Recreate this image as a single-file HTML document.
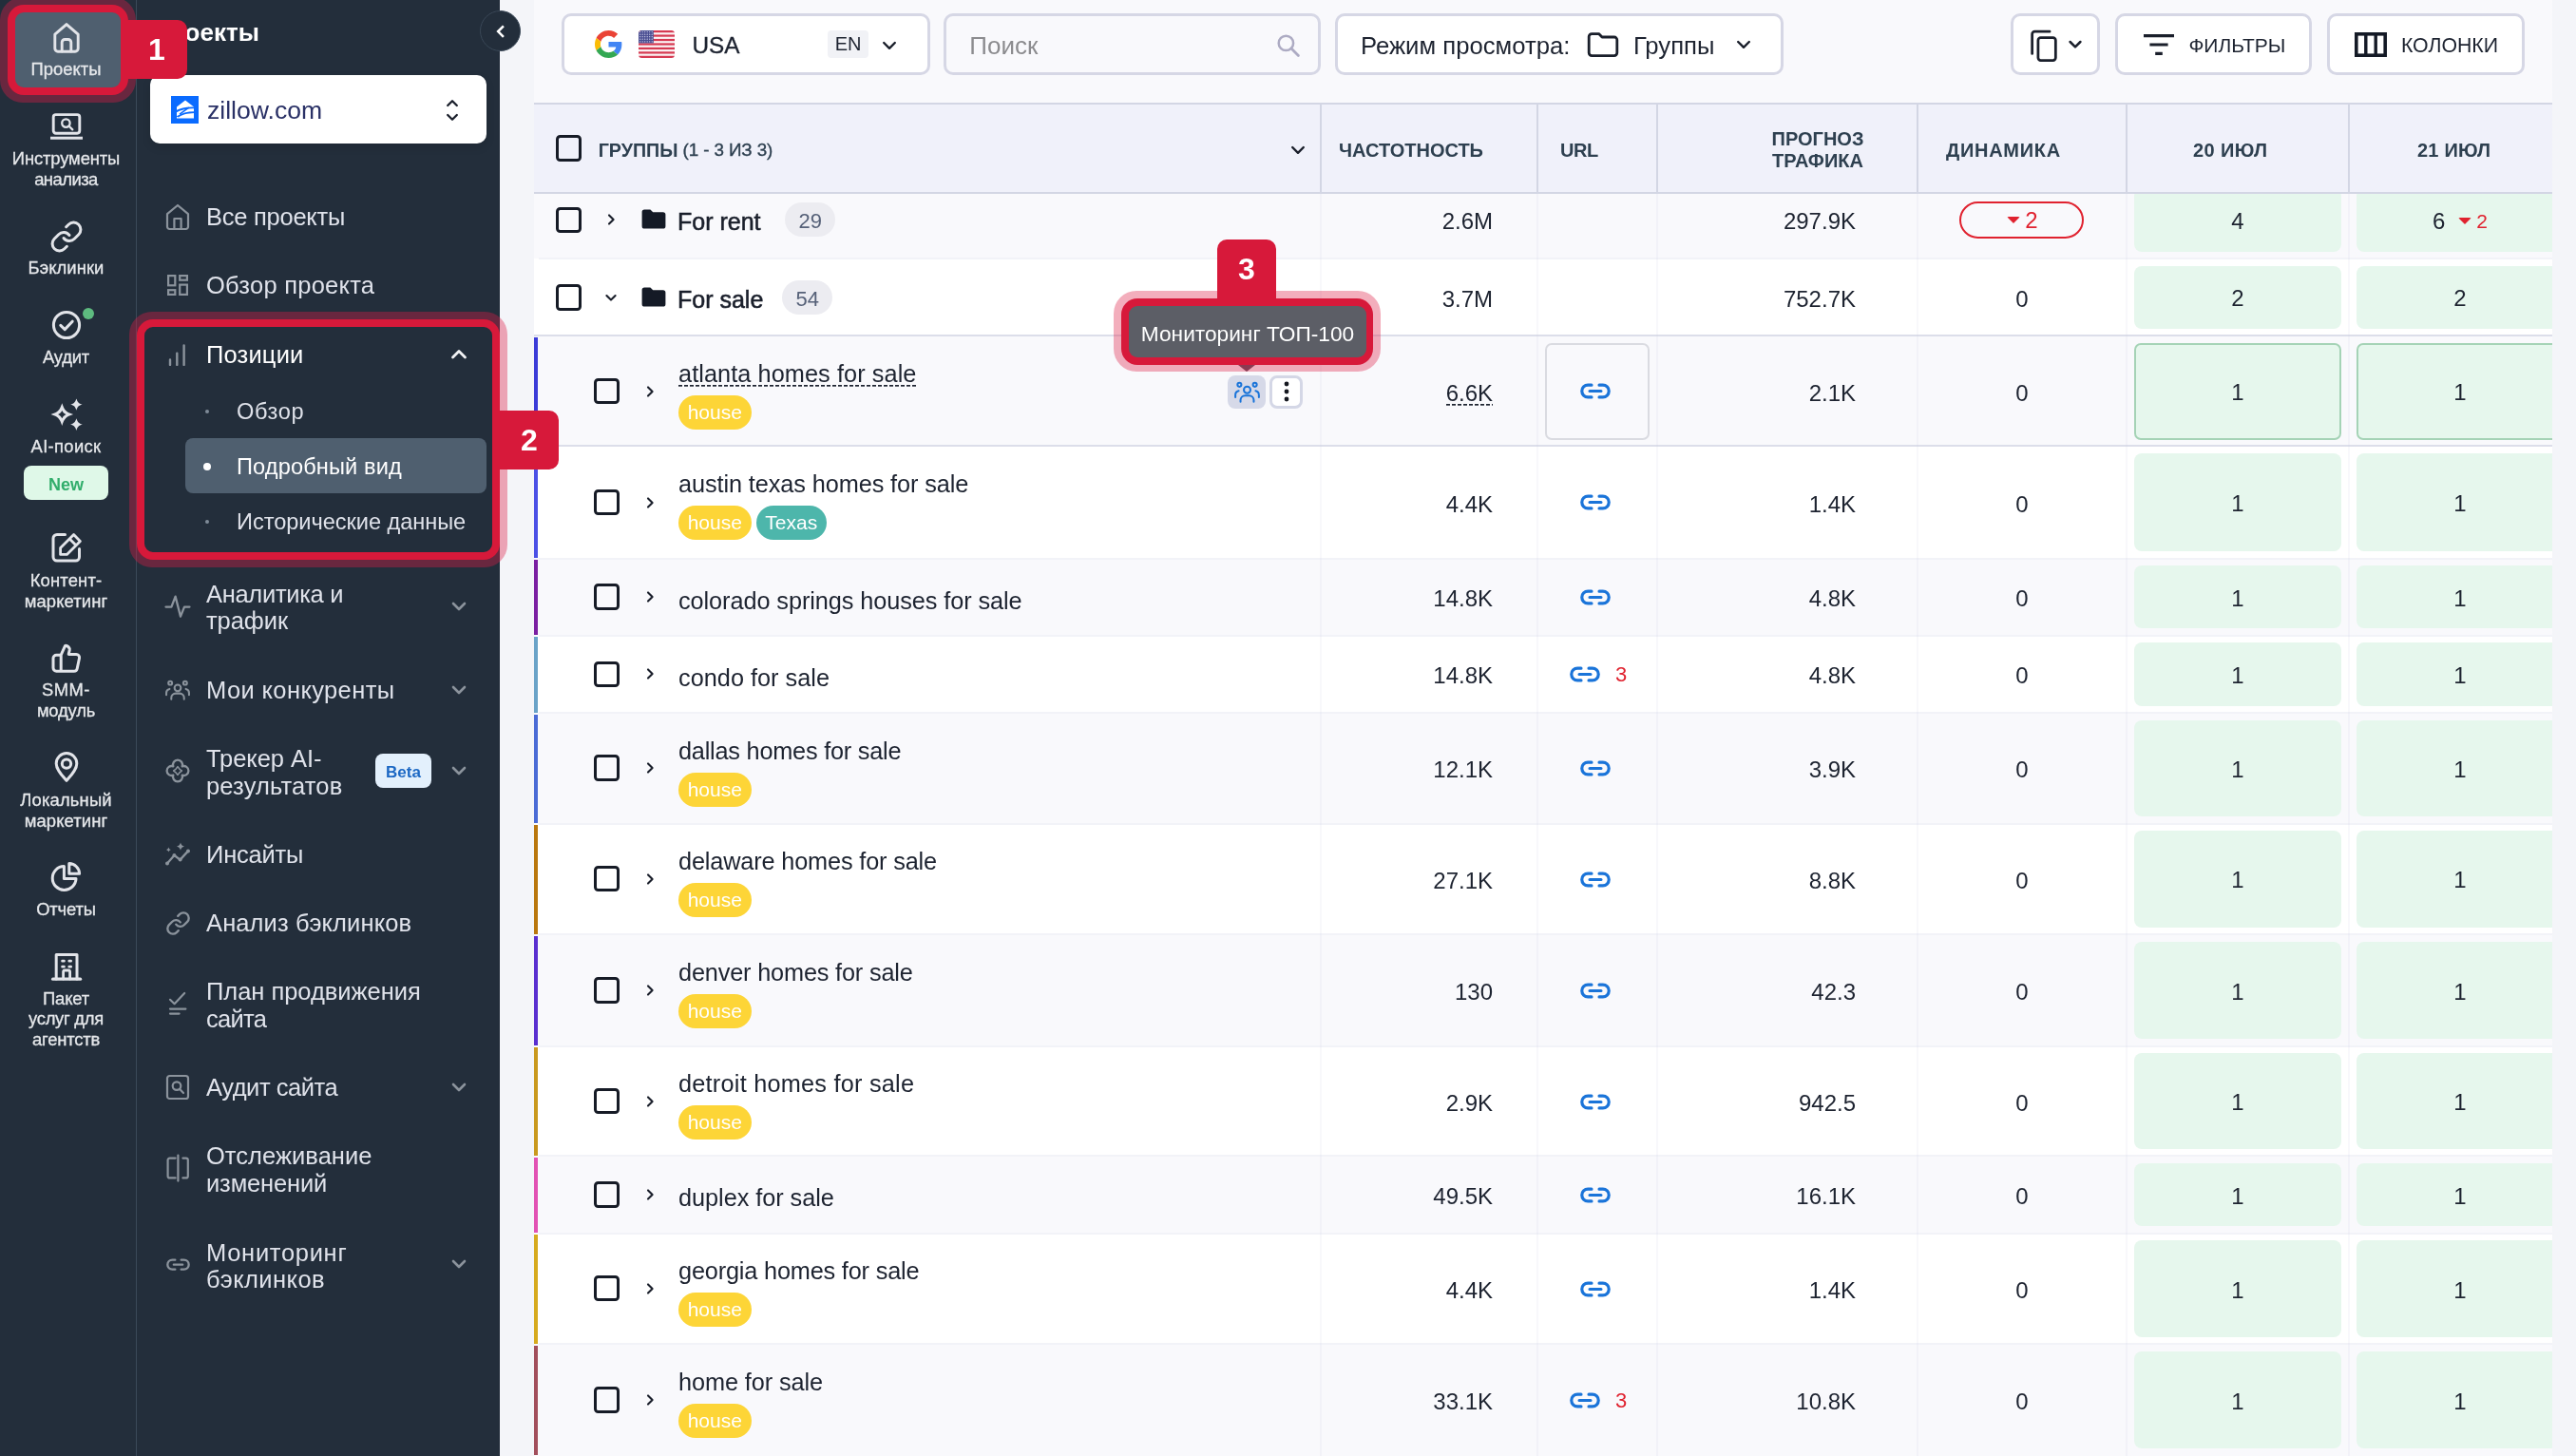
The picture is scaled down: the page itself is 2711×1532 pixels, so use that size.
<!DOCTYPE html>
<html lang="ru"><head><meta charset="utf-8"><title>Positions</title>
<style>
*{box-sizing:border-box;margin:0;padding:0}
html,body{width:2711px;height:1532px;overflow:hidden}
body{background:#f4f5f9;font-family:"Liberation Sans",sans-serif;color:#1d2330;position:relative}
svg{display:block}
#rail,#side,#panel,#collapse,.badge,#tip{will-change:transform}
#rail{position:absolute;left:0;top:0;width:144px;height:1532px;background:#232e3b;overflow:hidden}
#raildiv{position:absolute;left:142.8px;top:0;width:1.4px;height:1532px;background:#3b4958}
#side{position:absolute;left:144px;top:0;width:382px;height:1532px;background:#232e3b}
#side > *{margin-left:-144px}
.glow{position:absolute;background:rgba(222,30,70,.38)}
.redbox{position:absolute;background:#d7193a}
.redfr{position:absolute;border:8px solid #d7193a;box-sizing:content-box;background:#232e3b}
.tile{position:absolute;background:#4f5f6f;border-radius:9px}
.ri-ic{position:absolute;left:0;width:139px;height:34px;display:flex;justify-content:center;align-items:center}
.ri-lb{position:absolute;left:0;width:139px;text-align:center;font-size:18.4px;line-height:22px;color:#e6e8eb;white-space:nowrap;-webkit-text-stroke:0.3px #e6e8eb}
.gdot{position:absolute;left:87px;top:324px;width:12px;height:12px;border-radius:50%;background:#5dbb7f}
.newb{position:absolute;left:25px;top:490px;width:89px;height:36px;border-radius:8px;background:#dff8e8;color:#31ad6b;font-weight:700;font-size:18px;line-height:40px;text-align:center}
.sb-title{position:absolute;left:160px;top:19px;font-size:26px;font-weight:700;color:#fff;line-height:30px}
.psel{position:absolute;left:158px;top:79px;width:354px;height:72px;border-radius:10px;background:#fff;box-shadow:0 4px 10px rgba(0,0,0,.12)}
.psel .zl{position:absolute;left:22px;top:22px}
.psel .zt{position:absolute;left:60px;top:21px;font-size:26.6px;line-height:32px;color:#2a3166}
.psel .zc{position:absolute;left:305.6px;top:20.5px}
.mi-ic{position:absolute;left:173px;width:28px;height:28px;display:flex;justify-content:center;align-items:center}
.mi-tx{position:absolute;left:217px;font-size:25.5px;line-height:32px;color:#dfe2ea;white-space:nowrap}
.mi-ch{position:absolute;left:471px;width:24px;height:24px}
.beta{position:absolute;left:395px;top:793px;width:59px;height:36px;border-radius:8px;background:#e3f0fc;color:#1c68c4;font-weight:700;font-size:17px;line-height:40.5px;text-align:center}
#collapse{position:absolute;left:504.9px;top:10.9px;width:43.1px;height:43.1px;border-radius:50%;background:#232e3b;border:1.6px solid #3a4857;display:flex;align-items:center;justify-content:center}
#panel{position:absolute;left:562px;top:0;width:2124px;height:1532px;background:#f9f9fc;overflow:hidden}
#topbar{position:absolute;left:0;top:0;width:2124px;height:108px;background:#f9f9fc}
.tbx{position:absolute;top:14.2px;height:64.8px;border:3.4px solid #d6d7e5;border-radius:10px;background:#fff;margin-left:-0.6px;padding-right:1.2px;box-sizing:content-box;height:59.2px}
.tbx .t{position:absolute;top:0;line-height:62.4px;white-space:nowrap;color:#1d2330}
.tbx .en{position:absolute;left:276.4px;top:15.2px;width:43.5px;height:28.6px;border-radius:4px;background:#f1f2f6;font-size:20px;line-height:29px;text-align:center;color:#1d2330}
.thead{position:absolute;left:0;top:108px;width:2124px;height:96px;background:#f0f1fa;border-top:2px solid #d3d6e4;border-bottom:2px solid #d3d6e4}
.th{position:absolute;font-size:20px;font-weight:700;color:#2e4050;line-height:24px;white-space:nowrap}
.thc{position:absolute}
.vlh{position:absolute;top:0;width:2px;height:92px;background:#d3d6e4}
#rows{position:absolute;left:0;top:0;width:2124px;height:1532px}
.row{position:absolute;left:0;width:2124px}
.bar{position:absolute;left:0;top:1.6px;bottom:0.5px;width:4.2px}
.cb{position:absolute;width:27.4px;height:27.4px;border:3px solid #161b26;border-radius:4.5px;background:transparent}
.chv{position:absolute;width:20px;height:20px}
.fold{position:absolute}
.gname{position:absolute;font-size:25px;font-weight:400;-webkit-text-stroke:0.55px #1a1f2b;line-height:32px;color:#1a1f2b;white-space:nowrap;margin-left:1px}
.cnt{position:absolute;height:36px;padding:0 14.5px;border-radius:18px;background:#ececf1;color:#566178;font-size:22px;line-height:39px}
.kname{position:absolute;font-size:25.3px;line-height:30px;color:#1d2330;white-space:nowrap}
.und{background:repeating-linear-gradient(90deg,#1d2330 0 3.6px,transparent 3.6px 6px) 0 26.6px / 100% 1.7px no-repeat}
.tag{position:absolute;height:36px;border-radius:18px;color:#fff;font-size:21px;line-height:36px;text-align:center}
.num{position:absolute;font-size:24px;line-height:30px;color:#1d2330;white-space:nowrap}
.numc{position:absolute;font-size:24px;line-height:30px;color:#1d2330;text-align:center}
.lnk{position:absolute}
.red3{position:absolute;font-size:22px;line-height:24px;color:#e0222f}
.urlbox{position:absolute;border:2px solid #dadbe1;border-radius:7px;background:#f9f9fc}
.actA{position:absolute;width:40px;height:35px;border-radius:8px;background:#d6d9e8;display:flex;align-items:center;justify-content:center}
.actB{position:absolute;width:35px;height:35px;border-radius:8px;background:#fff;border:3px solid #d4d7e6;display:flex;align-items:center;justify-content:center}
.pill{position:absolute;width:131px;height:39px;border:2px solid #e0222f;border-radius:20px;color:#e0222f;font-size:24px;line-height:36px;display:flex;align-items:center;justify-content:center;padding-left:2px}
.tri{display:inline-block;width:0;height:0;border-left:7px solid transparent;border-right:7px solid transparent;border-top:7px solid #e0222f;border-radius:2px;margin-right:5px}
.gc{position:absolute;background:#e6f7ed;border-radius:8px;display:flex;align-items:center;justify-content:center;font-size:24px;color:#1d2330;padding-top:3px}
.gc.sel{border:2px solid #a5d3b6;border-radius:7px}
.gc .r2{color:#e0222f;font-size:21px}
.hl{position:absolute;left:4.5px;width:2124px;height:2px;background:#f2f3f8}
.hl.dk{left:0;height:1.9px;background:#dcdeea}
.vl{position:absolute;top:204px;width:2px;height:1330px;background:rgba(200,204,226,.13)}
.badge{position:absolute;background:#d7193a;color:#fff;font-weight:700;font-size:32px;display:flex;align-items:center;justify-content:center}
.badge span{position:relative}
#tipglow{position:absolute;left:1172px;top:306px;width:281px;height:85px;border-radius:24px;background:rgba(222,30,70,.36)}
#tipred{position:absolute;left:1180px;top:314px;width:265px;height:70px;border-radius:17px;background:#d7193a}
#tip{position:absolute;left:1188px;top:322px;width:250px;height:54px;border-radius:9px;background:#5c5e66;color:#fff;font-size:22.7px;line-height:58px;text-align:center;white-space:nowrap}
#tiparrow{position:absolute;left:1303px;top:384px;width:0;height:0;border-left:9px solid transparent;border-right:9px solid transparent;border-top:7px solid #8a3a52}

.subhl{position:absolute;left:194.8px;top:461.4px;width:317.4px;height:57.6px;border-radius:8px;background:#4f5f6f}
.subt{position:absolute;left:249px;font-size:23.6px;line-height:30px;color:#dfe2ea;white-space:nowrap}
.subt.act{color:#fff}
#side i.d1{position:absolute;left:216.1px;width:4.2px;height:4.2px;border-radius:50%;background:#7f8b98}
#side i.d2{position:absolute;left:214.1px;width:8.2px;height:8.2px;border-radius:50%;background:#fff}

</style></head>
<body>
<div id="rail"><div class="glow" style="left:0;top:-3px;width:143px;height:111px;border-radius:24px"></div><div class="redbox" style="left:8px;top:5px;width:127px;height:95px;border-radius:17px"></div><div class="tile" style="left:16px;top:13px;width:111px;height:79px"></div><div class="ri-ic" style="top:23px"><svg width="30" height="34" viewBox="0 0 30 34" fill="none" ><path d="M2.8 13.2 L15 2.6 L27.2 13.2 V28 a3.2 3.2 0 0 1 -3.2 3.2 H6 a3.2 3.2 0 0 1 -3.2 -3.2 Z" stroke="#e2e4e9" stroke-width="2.9" stroke-linecap="round" stroke-linejoin="round"/><path d="M10.2 31 V21.5 a3 3 0 0 1 3 -3 h3.6 a3 3 0 0 1 3 3 V31" stroke="#e2e4e9" stroke-width="2.9" stroke-linecap="round" stroke-linejoin="round"/></svg></div><div class="ri-lb" style="top:62.0px;letter-spacing:0.043px">Проекты</div><div class="ri-ic" style="top:116px"><svg width="36" height="30" viewBox="0 0 36 30" fill="none" ><rect x="4.2" y="2.6" width="27.6" height="19.6" rx="2.6" stroke="#e2e4e9" stroke-width="2.9" stroke-linecap="round" stroke-linejoin="round"/><path d="M1 27.3 H35" stroke="#e2e4e9" stroke-width="3.1"/><circle cx="17.4" cy="11.6" r="4.2" stroke="#e2e4e9" stroke-width="2.3" stroke-linecap="round" stroke-linejoin="round"/><path d="M20.6 14.8 L24.3 18.4" stroke="#e2e4e9" stroke-width="2.3" stroke-linecap="round" stroke-linejoin="round"/></svg></div><div class="ri-lb" style="top:156.0px;letter-spacing:-0.116px">Инструменты</div><div class="ri-lb" style="top:177.6px;letter-spacing:-0.512px">анализа</div><div class="ri-ic" style="top:232px"><svg width="36" height="36" viewBox="0 0 24 24" fill="none" ><g stroke="#e2e4e9" stroke-width="2" stroke-linecap="round" stroke-linejoin="round"><path d="M10 13a5 5 0 0 0 7.54.54l3-3a5 5 0 0 0-7.07-7.07l-1.72 1.71"/><path d="M14 11a5 5 0 0 0-7.54-.54l-3 3a5 5 0 0 0 7.07 7.07l1.71-1.71"/></g></svg></div><div class="ri-lb" style="top:271.0px;letter-spacing:0.089px">Бэклинки</div><div class="ri-ic" style="top:325px"><svg width="34" height="34" viewBox="0 0 34 34" fill="none" ><circle cx="17" cy="17" r="13.6" stroke="#e2e4e9" stroke-width="3" stroke-linecap="round" stroke-linejoin="round"/><path d="M10.8 17.4 L15.2 21.6 L23.2 13.2" stroke="#e2e4e9" stroke-width="3" stroke-linecap="round" stroke-linejoin="round"/></svg></div><div class="ri-lb" style="top:365.0px;letter-spacing:-0.236px">Аудит</div><div class="gdot"></div><div class="ri-ic" style="top:419px"><svg width="36" height="36" viewBox="0 0 36 36" fill="none" ><path d="M13.3 6.300000000000001 C15.896 13.9464 17.4536 15.504000000000001 25.1 18.1 C17.4536 20.696 15.896 22.253600000000002 13.3 29.900000000000002 C10.704 22.253600000000002 9.1464 20.696 1.5 18.1 C9.1464 15.504000000000001 10.704 13.9464 13.3 6.300000000000001 Z M13.3 13.900000000000002 C14.56 16.084000000000003 15.316 16.84 17.5 18.1 C15.316 19.360000000000003 14.56 20.116 13.3 22.3 C12.040000000000001 20.116 11.284 19.360000000000003 9.100000000000001 18.1 C11.284 16.84 12.040000000000001 16.084000000000003 13.3 13.900000000000002 Z" fill="#e2e4e9" fill-rule="evenodd"/><path d="M28.4 1.3999999999999995 C29.764 5.417599999999999 30.5824 6.236 34.6 7.6 C30.5824 8.964 29.764 9.782399999999999 28.4 13.8 C27.035999999999998 9.782399999999999 26.217599999999997 8.964 22.2 7.6 C26.217599999999997 6.236 27.035999999999998 5.417599999999999 28.4 1.3999999999999995 Z" fill="#e2e4e9"/><path d="M28.4 22.200000000000003 C29.808 26.3472 30.6528 27.192 34.8 28.6 C30.6528 30.008000000000003 29.808 30.852800000000002 28.4 35.0 C26.991999999999997 30.852800000000002 26.147199999999998 30.008000000000003 22.0 28.6 C26.147199999999998 27.192 26.991999999999997 26.3472 28.4 22.200000000000003 Z" fill="#e2e4e9"/></svg></div><div class="ri-lb" style="top:459.0px;letter-spacing:0.337px">AI-поиск</div><div class="newb">New</div><div class="ri-ic" style="top:559px"><svg width="34" height="34" viewBox="0 0 34 34" fill="none" ><path d="M15.5 3.5 H7 a4 4 0 0 0 -4 4 V27 a4 4 0 0 0 4 4 H26.5 a4 4 0 0 0 4 -4 V18.5" stroke="#e2e4e9" stroke-width="3" stroke-linecap="round" stroke-linejoin="round"/><path d="M24.6 3.6 L31.4 10.4 L17.4 24.4 H10.6 V17.6 Z M20.2 8 L27 14.8" stroke="#e2e4e9" stroke-width="2.8" stroke-linecap="round" stroke-linejoin="round" /></svg></div><div class="ri-lb" style="top:600.0px;letter-spacing:0.156px">Контент-</div><div class="ri-lb" style="top:621.6px;letter-spacing:0.119px">маркетинг</div><div class="ri-ic" style="top:676px"><svg width="34" height="34" viewBox="0 0 34 34" fill="none" ><path d="M11.2 13.2 L15.6 3.4 a4.2 4.2 0 0 1 4.6 4.6 L19.2 12.4 h8 a3.4 3.4 0 0 1 3.3 4.1 l-2.3 11 a3.4 3.4 0 0 1 -3.3 2.7 H6.4 a3.4 3.4 0 0 1 -3.4 -3.4 V16.6 a3.4 3.4 0 0 1 3.4 -3.4 Z M11.2 13.2 V30" stroke="#e2e4e9" stroke-width="3" stroke-linecap="round" stroke-linejoin="round"/></svg></div><div class="ri-lb" style="top:715.0px;letter-spacing:0.442px">SMM-</div><div class="ri-lb" style="top:736.6px;letter-spacing:-0.185px">модуль</div><div class="ri-ic" style="top:790px"><svg width="30" height="34" viewBox="0 0 30 34" fill="none" ><path d="M15 31.4 C10 25.5 4.2 19.6 4.2 13.4 a10.8 10.8 0 0 1 21.6 0 C25.8 19.6 20 25.5 15 31.4 Z" stroke="#e2e4e9" stroke-width="3" stroke-linecap="round" stroke-linejoin="round"/><circle cx="15" cy="13.6" r="4.7" stroke="#e2e4e9" stroke-width="3" stroke-linecap="round" stroke-linejoin="round"/></svg></div><div class="ri-lb" style="top:831.0px;letter-spacing:0.163px">Локальный</div><div class="ri-lb" style="top:852.6px;letter-spacing:0.119px">маркетинг</div><div class="ri-ic" style="top:906px"><svg width="34" height="34" viewBox="0 0 34 34" fill="none" ><path d="M14.4 5.6 A12.4 12.4 0 1 0 27 18.6 H14.4 Z" stroke="#e2e4e9" stroke-width="3" stroke-linecap="round" stroke-linejoin="round"/><path d="M19.8 2.6 A11 11 0 0 1 30.6 13.2 H19.8 Z" stroke="#e2e4e9" stroke-width="3" stroke-linecap="round" stroke-linejoin="round"/></svg></div><div class="ri-lb" style="top:946.0px;letter-spacing:-0.163px">Отчеты</div><div class="ri-ic" style="top:1000px"><svg width="34" height="34" viewBox="0 0 34 34" fill="none" ><path d="M6.2 30 V4.4 H28 V30" stroke="#e2e4e9" stroke-width="3" stroke-linecap="round" stroke-linejoin="round" stroke-linejoin="miter"/><path d="M2.6 30.2 H31.6" stroke="#e2e4e9" stroke-width="3.2" stroke-linecap="round" stroke-linejoin="round"/><path d="M13.6 30 V22.6 a1.6 1.6 0 0 1 1.6 -1.6 h3.8 a1.6 1.6 0 0 1 1.6 1.6 V30" stroke="#e2e4e9" stroke-width="2.8" stroke-linecap="round" stroke-linejoin="round"/><path d="M12.6 11.2 h1.8 M19.8 11.2 h1.8 M12.6 17.2 h1.8 M19.8 17.2 h1.8" stroke="#e2e4e9" stroke-width="2.8" stroke-linecap="round" stroke-linejoin="round"/></svg></div><div class="ri-lb" style="top:1039.5px;letter-spacing:-0.170px">Пакет</div><div class="ri-lb" style="top:1061.1px;letter-spacing:-0.251px">услуг для</div><div class="ri-lb" style="top:1082.7px;letter-spacing:-0.179px">агентств</div></div>
<div id="raildiv"></div>
<div id="side"><div class="sb-title">Проекты</div><div class="psel"><div class="zl"><svg width="29" height="29" viewBox="0 0 29 29" fill="none" ><rect width="29" height="29" fill="#0a6bff"/><path d="M15 4.6 L24 11.6 V23.6 H6 V11.6 Z" fill="#fff"/><path d="M5 15.2 C10 12.6 17 11 24.6 11.6 L24.6 13.4 C17 13 10.4 14.8 5 17.8 Z" fill="#0a6bff"/><path d="M19.6 12.6 L9.6 19.8 L8.6 18.4 L18.4 11.6 Z" fill="#0a6bff"/><path d="M5.4 21.4 C11 18 17 16.2 24.6 16.2 L24.6 18 C17 18.2 11 19.8 8 22.4 Z" fill="#0a6bff"/></svg></div><div class="zt">zillow.com</div><div class="zc"><svg width="24" height="32" viewBox="0 0 24 32" fill="none" ><path d="M7.2 11 L12 6.2 L16.8 11 M7.2 21 L12 25.8 L16.8 21" stroke="#1a1f2b" stroke-width="2.3" stroke-linecap="round" stroke-linejoin="round"/></svg></div></div><div class="mi-ic" style="top:214.3px"><svg width="26" height="29" viewBox="0 0 26 29" fill="none" ><path d="M2 11.2 L13 2 L24 11.2 V24.6 a2.4 2.4 0 0 1 -2.4 2.4 H4.4 a2.4 2.4 0 0 1 -2.4 -2.4 Z" stroke="#8b939c" stroke-width="2.2" stroke-linecap="round" stroke-linejoin="round"/><path d="M9.4 27 V16 H16.6 V27" stroke="#8b939c" stroke-width="2.2" stroke-linecap="round" stroke-linejoin="round" stroke-linejoin="miter"/></svg></div><div class="mi-tx" style="top:212.3px;letter-spacing:-0.259px">Все проекты</div><div class="mi-ic" style="top:286.2px"><svg width="24" height="24" viewBox="0 0 24 24" fill="none" ><g stroke="#8b939c" stroke-width="2.2"><rect x="2.1" y="2.1" width="7.2" height="10.2"/><rect x="14.2" y="2.1" width="7.7" height="4.6"/><rect x="14.2" y="11.6" width="7.7" height="10.3"/><rect x="2.1" y="17.2" width="7.2" height="4.7"/></g></svg></div><div class="mi-tx" style="top:284.2px;letter-spacing:0.238px">Обзор проекта</div><div class="glow" style="left:136px;top:328px;width:398px;height:269px;border-radius:24px"></div><div class="redfr" style="left:144px;top:336px;width:366px;height:237px;border-radius:17px"></div><div class="mi-ic" style="top:358.7px"><svg width="22" height="24" viewBox="0 0 22 24" fill="none" ><path d="M3 17.5 V23 M10.3 10.6 V23 M17.6 2.4 V23" stroke="#8b939c" stroke-width="2.4" stroke-linecap="round"/></svg></div><div class="mi-tx" style="top:356.7px;letter-spacing:0.176px;color:#fff">Позиции</div><div class="mi-ch" style="top:360.7px"><svg width="24" height="24" viewBox="0 0 24 24" fill="none" ><path d="M5.5 15 L12 8.5 L18.5 15" stroke="#f2f3f5" stroke-width="2.8" stroke-linecap="round" stroke-linejoin="round"/></svg></div><div class="subhl"></div><i class="d1" style="top:431.0px"></i><div class="subt" style="top:418.4px;letter-spacing:0.629px">Обзор</div><i class="d2" style="top:486.7px"></i><div class="subt act" style="top:476.1px;letter-spacing:0.123px">Подробный вид</div><i class="d1" style="top:546.6px"></i><div class="subt" style="top:534.0px;letter-spacing:-0.050px">Исторические данные</div><div class="mi-ic" style="top:623.6px"><svg width="28" height="28" viewBox="0 0 28 28" fill="none" ><path d="M1.5 14.6 H7.4 L11.6 3.6 L17 24.6 L21 14.6 H26.5" stroke="#8b939c" stroke-width="2.3" stroke-linecap="round" stroke-linejoin="round"/></svg></div><div class="mi-tx" style="top:608.8px;letter-spacing:-0.304px">Аналитика и</div><div class="mi-tx" style="top:637.4px;letter-spacing:-0.073px">трафик</div><div class="mi-ch" style="top:625.6px"><svg width="24" height="24" viewBox="0 0 24 24" fill="none" ><path d="M6 9 L12 15 L18 9" stroke="#8b939c" stroke-width="2.6" stroke-linecap="round" stroke-linejoin="round"/></svg></div><div class="mi-ic" style="top:711.7px"><svg width="30" height="26" viewBox="-1 0 30 25" fill="none" ><g stroke="#8b939c" stroke-width="2.2" stroke-linecap="round" stroke-linejoin="round"><circle cx="14" cy="10.2" r="3.6"/><path d="M6.8 23 v-1.6 a5 5 0 0 1 5 -5 h4.4 a5 5 0 0 1 5 5 V23"/><circle cx="5.6" cy="4.6" r="2.1"/><circle cx="22.4" cy="4.6" r="2.1"/><path d="M1.2 18.2 v-2.4 a4.6 4.6 0 0 1 3.6 -4.5 M26.8 18.2 v-2.4 a4.6 4.6 0 0 0 -3.6 -4.5"/></g></svg></div><div class="mi-tx" style="top:709.7px;letter-spacing:0.378px">Мои конкуренты</div><div class="mi-ch" style="top:713.7px"><svg width="24" height="24" viewBox="0 0 24 24" fill="none" ><path d="M6 9 L12 15 L18 9" stroke="#8b939c" stroke-width="2.6" stroke-linecap="round" stroke-linejoin="round"/></svg></div><div class="mi-ic" style="top:797.1px"><svg width="28" height="28" viewBox="0 0 28 28" fill="none" ><path d="M9.3 9.3 A5 5 0 1 1 18.7 9.3 A5 5 0 1 1 18.7 18.7 A5 5 0 1 1 9.3 18.7 A5 5 0 1 1 9.3 9.3 Z" stroke="#8b939c" stroke-width="2.3" stroke-linecap="round" stroke-linejoin="round"/><path d="M14 9.6 C15.32 11.888 16.112000000000002 12.68 18.4 14 C16.112000000000002 15.32 15.32 16.112000000000002 14 18.4 C12.68 16.112000000000002 11.888 15.32 9.6 14 C11.888 12.68 12.68 11.888 14 9.6 Z" stroke="#8b939c" stroke-width="1.5" stroke-linecap="round" stroke-linejoin="round"/></svg></div><div class="mi-tx" style="top:782.3px;letter-spacing:-0.058px">Трекер AI-</div><div class="mi-tx" style="top:810.9px;letter-spacing:0.153px">результатов</div><div class="mi-ch" style="top:799.1px"><svg width="24" height="24" viewBox="0 0 24 24" fill="none" ><path d="M6 9 L12 15 L18 9" stroke="#8b939c" stroke-width="2.6" stroke-linecap="round" stroke-linejoin="round"/></svg></div><div class="beta">Beta</div><div class="mi-ic" style="top:884.9px"><svg width="28" height="26" viewBox="0 0 28 26" fill="none" ><path d="M3 22.4 L10.4 14 L16.6 18.6 L25 9.4" stroke="#8b939c" stroke-width="2.3" stroke-linecap="round" stroke-linejoin="round"/><circle cx="3" cy="22.4" r="2" fill="#8b939c"/><circle cx="10.4" cy="14" r="2" fill="#8b939c"/><circle cx="16.6" cy="18.6" r="2" fill="#8b939c"/><circle cx="25" cy="9.4" r="2" fill="#8b939c"/><path d="M17 0.39999999999999947 C17.924 3.1215999999999995 18.4784 3.6759999999999997 21.2 4.6 C18.4784 5.524 17.924 6.0784 17 8.8 C16.076 6.0784 15.5216 5.524 12.8 4.6 C15.5216 3.6759999999999997 16.076 3.1215999999999995 17 0.39999999999999947 Z" fill="#8b939c"/><path d="M4.4 5.4 C4.972 7.0847999999999995 5.315200000000001 7.428 7.0 8 C5.315200000000001 8.572 4.972 8.9152 4.4 10.6 C3.8280000000000003 8.9152 3.4848000000000003 8.572 1.8000000000000003 8 C3.4848000000000003 7.428 3.8280000000000003 7.0847999999999995 4.4 5.4 Z" fill="#8b939c"/></svg></div><div class="mi-tx" style="top:882.9px;letter-spacing:-0.199px">Инсайты</div><div class="mi-ic" style="top:957.0px"><svg width="27" height="27" viewBox="0 0 24 24" fill="none" ><g stroke="#8b939c" stroke-width="2.1" stroke-linecap="round" stroke-linejoin="round"><path d="M10 13a5 5 0 0 0 7.54.54l3-3a5 5 0 0 0-7.07-7.07l-1.72 1.71"/><path d="M14 11a5 5 0 0 0-7.54-.54l-3 3a5 5 0 0 0 7.07 7.07l1.71-1.71"/></g></svg></div><div class="mi-tx" style="top:955.0px;letter-spacing:0.117px">Анализ бэклинков</div><div class="mi-ic" style="top:1042.0px"><svg width="22" height="28" viewBox="0 0 22 28" fill="none" ><path d="M3 9.8 L7.6 14.2 L18.2 3" stroke="#8b939c" stroke-width="2.2" stroke-linecap="round" stroke-linejoin="round"/><path d="M3 19.6 H19.4 M3 24.6 H12.6" stroke="#8b939c" stroke-width="2.2" stroke-linecap="round" stroke-linejoin="round" stroke-linecap="butt"/></svg></div><div class="mi-tx" style="top:1027.2px;letter-spacing:-0.026px">План продвижения</div><div class="mi-tx" style="top:1055.8px;letter-spacing:-0.713px">сайта</div><div class="mi-ic" style="top:1130.2px"><svg width="26" height="28" viewBox="0 0 26 28" fill="none" ><rect x="2" y="2" width="22" height="24" rx="2.6" stroke="#8b939c" stroke-width="2.2" stroke-linecap="round" stroke-linejoin="round"/><circle cx="12" cy="12.6" r="4.3" stroke="#8b939c" stroke-width="2.2" stroke-linecap="round" stroke-linejoin="round"/><path d="M15.2 16 L19 20" stroke="#8b939c" stroke-width="2.2" stroke-linecap="round" stroke-linejoin="round"/></svg></div><div class="mi-tx" style="top:1128.2px;letter-spacing:-0.461px">Аудит сайта</div><div class="mi-ch" style="top:1132.2px"><svg width="24" height="24" viewBox="0 0 24 24" fill="none" ><path d="M6 9 L12 15 L18 9" stroke="#8b939c" stroke-width="2.6" stroke-linecap="round" stroke-linejoin="round"/></svg></div><div class="mi-ic" style="top:1215.2px"><svg width="26" height="30" viewBox="0 0 26 30" fill="none" ><path d="M10.6 4.6 H4.6 a2 2 0 0 0 -2 2 V23.4 a2 2 0 0 0 2 2 H10.6 M18.4 4.6 h3.4 a2 2 0 0 1 2 2 V23.4 a2 2 0 0 1 -2 2 H18.4 M13.4 1.6 V28.6" stroke="#8b939c" stroke-width="2.2" stroke-linecap="round" stroke-linejoin="round"/></svg></div><div class="mi-tx" style="top:1200.4px;letter-spacing:0.040px">Отслеживание</div><div class="mi-tx" style="top:1229.0px;letter-spacing:-0.143px">изменений</div><div class="mi-ic" style="top:1316.4px"><svg width="25" height="13.4" viewBox="0 0 30 16" fill="none" ><path d="M11.2 2 H7.6 a6 6 0 0 0 0 12 H11.2 M18.8 2 H22.4 a6 6 0 0 1 0 12 H18.8 M9.4 8 H20.6" stroke="#8b939c" stroke-width="2.8" stroke-linecap="round" stroke-linejoin="round"/></svg></div><div class="mi-tx" style="top:1301.6px;letter-spacing:0.698px">Мониторинг</div><div class="mi-tx" style="top:1330.2px;letter-spacing:0.427px">бэклинков</div><div class="mi-ch" style="top:1318.4px"><svg width="24" height="24" viewBox="0 0 24 24" fill="none" ><path d="M6 9 L12 15 L18 9" stroke="#8b939c" stroke-width="2.6" stroke-linecap="round" stroke-linejoin="round"/></svg></div></div>
<div id="panel">
  <div id="rows"><div class="row" style="top:190px;height:82px;background:#f9f9fc"><div class="cb" style="left:23px;top:27.5px"></div><div class="chv" style="left:71px;top:31.0px"><svg width="20" height="20" viewBox="0 0 20 20" fill="none" ><path d="M8 5.4 L12.6 10 L8 14.6" stroke="#1a1f2b" stroke-width="2.1" stroke-linecap="round" stroke-linejoin="round"/></svg></div><div class="fold" style="left:113px;top:30.0px"><svg width="26" height="21" viewBox="0 0 26 21" fill="none" ><path d="M0.6 3 a2.6 2.6 0 0 1 2.6 -2.6 H9.4 l2.8 2.8 H22.8 a2.6 2.6 0 0 1 2.6 2.6 V18 a2.6 2.6 0 0 1 -2.6 2.6 H3.2 a2.6 2.6 0 0 1 -2.6 -2.6 Z" fill="#141a26"/></svg></div><div class="gname" style="left:150px;top:27.0px">For rent</div><div class="cnt" style="left:264px;top:23.0px">29</div><div class="num" style="right:1115px;top:28.0px">2.6M</div><div class="num" style="right:733px;top:28.0px">297.9K</div><div class="pill" style="left:1500px;top:22.0px"><i class="tri"></i>2</div><div class="gc" style="left:1684px;top:7.5px;width:218px;height:67.0px"><span>4</span></div><div class="gc" style="left:1918px;top:7.5px;width:218px;height:67.0px;padding-left:0"><span>6</span><i class="tri" style="margin-left:14px"></i><span class="r2">2</span></div></div><div class="row" style="top:272px;height:81.7px;background:#ffffff"><div class="cb" style="left:23px;top:27.4px"></div><div class="chv" style="left:71px;top:30.9px"><svg width="20" height="20" viewBox="0 0 20 20" fill="none" ><path d="M5.4 8 L10 12.6 L14.6 8" stroke="#1a1f2b" stroke-width="2.1" stroke-linecap="round" stroke-linejoin="round"/></svg></div><div class="fold" style="left:113px;top:29.9px"><svg width="26" height="21" viewBox="0 0 26 21" fill="none" ><path d="M0.6 3 a2.6 2.6 0 0 1 2.6 -2.6 H9.4 l2.8 2.8 H22.8 a2.6 2.6 0 0 1 2.6 2.6 V18 a2.6 2.6 0 0 1 -2.6 2.6 H3.2 a2.6 2.6 0 0 1 -2.6 -2.6 Z" fill="#141a26"/></svg></div><div class="gname" style="left:150px;top:26.9px">For sale</div><div class="cnt" style="left:261px;top:22.9px">54</div><div class="num" style="right:1115px;top:27.9px">3.7M</div><div class="num" style="right:733px;top:27.9px">752.7K</div><div class="numc" style="left:1456px;width:220px;top:27.9px">0</div><div class="gc" style="left:1684px;top:7.5px;width:218px;height:66.7px"><span>2</span></div><div class="gc" style="left:1918px;top:7.5px;width:218px;height:66.7px"><span>2</span></div></div><div class="row" style="top:353.7px;height:116px;background:#f9f9fc"><div class="bar" style="background:#3b3bd8"></div><div class="cb" style="left:62.60000000000002px;top:44.1px"></div><div class="chv" style="left:112px;top:48.0px"><svg width="20" height="20" viewBox="0 0 20 20" fill="none" ><path d="M8 5.4 L12.6 10 L8 14.6" stroke="#1a1f2b" stroke-width="2.1" stroke-linecap="round" stroke-linejoin="round"/></svg></div><div class="kname und" style="left:152px;top:24.4px;letter-spacing:0.072px">atlanta homes for sale</div><div class="tag" style="left:152px;top:62.4px;width:76.5px;background:#fdd537">house</div><div class="num und" style="right:1115px;top:45.0px">6.6K</div><div class="urlbox" style="left:1064px;top:7px;width:110px;height:102px"></div><div class="actA" style="left:730px;top:41.0px"><svg width="29" height="25" viewBox="-1 0 30 25" fill="none" ><g stroke="#1a74d9" stroke-width="2.1" stroke-linecap="round" stroke-linejoin="round"><circle cx="14" cy="10.2" r="3.6"/><path d="M6.8 23 v-1.6 a5 5 0 0 1 5 -5 h4.4 a5 5 0 0 1 5 5 V23"/><circle cx="5.6" cy="4.6" r="2.1"/><circle cx="22.4" cy="4.6" r="2.1"/><path d="M1.2 18.2 v-2.4 a4.6 4.6 0 0 1 3.6 -4.5 M26.8 18.2 v-2.4 a4.6 4.6 0 0 0 -3.6 -4.5"/></g></svg></div><div class="actB" style="left:774px;top:41.0px"><svg width="8" height="24" viewBox="0 0 8 24" fill="none" ><circle cx="4" cy="4" r="2.4" fill="#14171f"/><circle cx="4" cy="12" r="2.4" fill="#14171f"/><circle cx="4" cy="20" r="2.4" fill="#14171f"/></svg></div><div class="lnk" style="left:1101px;top:49.7px"><svg width="32" height="17" viewBox="0 0 30 16" fill="none" ><path d="M11.2 2 H7.6 a6 6 0 0 0 0 12 H11.2 M18.8 2 H22.4 a6 6 0 0 1 0 12 H18.8 M9.4 8 H20.6" stroke="#1a74d9" stroke-width="3" stroke-linecap="round" stroke-linejoin="round"/></svg></div><div class="num" style="right:733px;top:45.0px">2.1K</div><div class="numc" style="left:1456px;width:220px;top:45.0px">0</div><div class="gc sel" style="left:1684px;top:7px;width:218px;height:102px"><span>1</span></div><div class="gc sel" style="left:1918px;top:7px;width:218px;height:102px"><span>1</span></div></div><div class="row" style="top:469.7px;height:117.8px;background:#ffffff"><div class="bar" style="background:#4b50e6"></div><div class="cb" style="left:62.60000000000002px;top:45.0px"></div><div class="chv" style="left:112px;top:48.9px"><svg width="20" height="20" viewBox="0 0 20 20" fill="none" ><path d="M8 5.4 L12.6 10 L8 14.6" stroke="#1a1f2b" stroke-width="2.1" stroke-linecap="round" stroke-linejoin="round"/></svg></div><div class="kname" style="left:152px;top:24.4px;letter-spacing:-0.098px">austin texas homes for sale</div><div class="tag" style="left:152px;top:62.4px;width:76.5px;background:#fdd537">house</div><div class="tag" style="left:233.5px;top:62.4px;width:74.5px;background:#4db6ab">Texas</div><div class="num" style="right:1115px;top:45.9px">4.4K</div><div class="lnk" style="left:1101px;top:50.6px"><svg width="32" height="17" viewBox="0 0 30 16" fill="none" ><path d="M11.2 2 H7.6 a6 6 0 0 0 0 12 H11.2 M18.8 2 H22.4 a6 6 0 0 1 0 12 H18.8 M9.4 8 H20.6" stroke="#1a74d9" stroke-width="3" stroke-linecap="round" stroke-linejoin="round"/></svg></div><div class="num" style="right:733px;top:45.9px">1.4K</div><div class="numc" style="left:1456px;width:220px;top:45.9px">0</div><div class="gc" style="left:1684px;top:7.5px;width:218px;height:102.8px"><span>1</span></div><div class="gc" style="left:1918px;top:7.5px;width:218px;height:102.8px"><span>1</span></div></div><div class="row" style="top:587.5px;height:81.4px;background:#f9f9fc"><div class="bar" style="background:#7b1fa2"></div><div class="cb" style="left:62.60000000000002px;top:26.8px"></div><div class="chv" style="left:112px;top:30.7px"><svg width="20" height="20" viewBox="0 0 20 20" fill="none" ><path d="M8 5.4 L12.6 10 L8 14.6" stroke="#1a1f2b" stroke-width="2.1" stroke-linecap="round" stroke-linejoin="round"/></svg></div><div class="kname" style="left:152px;top:29.1px;letter-spacing:-0.081px">colorado springs houses for sale</div><div class="num" style="right:1115px;top:27.7px">14.8K</div><div class="lnk" style="left:1101px;top:32.4px"><svg width="32" height="17" viewBox="0 0 30 16" fill="none" ><path d="M11.2 2 H7.6 a6 6 0 0 0 0 12 H11.2 M18.8 2 H22.4 a6 6 0 0 1 0 12 H18.8 M9.4 8 H20.6" stroke="#1a74d9" stroke-width="3" stroke-linecap="round" stroke-linejoin="round"/></svg></div><div class="num" style="right:733px;top:27.7px">4.8K</div><div class="numc" style="left:1456px;width:220px;top:27.7px">0</div><div class="gc" style="left:1684px;top:7.5px;width:218px;height:66.4px"><span>1</span></div><div class="gc" style="left:1918px;top:7.5px;width:218px;height:66.4px"><span>1</span></div></div><div class="row" style="top:668.9px;height:81.3px;background:#ffffff"><div class="bar" style="background:#6aa3c8"></div><div class="cb" style="left:62.60000000000002px;top:26.8px"></div><div class="chv" style="left:112px;top:30.6px"><svg width="20" height="20" viewBox="0 0 20 20" fill="none" ><path d="M8 5.4 L12.6 10 L8 14.6" stroke="#1a1f2b" stroke-width="2.1" stroke-linecap="round" stroke-linejoin="round"/></svg></div><div class="kname" style="left:152px;top:29.0px;letter-spacing:0.006px">condo for sale</div><div class="num" style="right:1115px;top:27.6px">14.8K</div><div class="lnk" style="left:1089.5px;top:32.3px"><svg width="32" height="17" viewBox="0 0 30 16" fill="none" ><path d="M11.2 2 H7.6 a6 6 0 0 0 0 12 H11.2 M18.8 2 H22.4 a6 6 0 0 1 0 12 H18.8 M9.4 8 H20.6" stroke="#1a74d9" stroke-width="3" stroke-linecap="round" stroke-linejoin="round"/></svg></div><div class="red3" style="left:1138px;top:29.6px">3</div><div class="num" style="right:733px;top:27.6px">4.8K</div><div class="numc" style="left:1456px;width:220px;top:27.6px">0</div><div class="gc" style="left:1684px;top:7.5px;width:218px;height:66.3px"><span>1</span></div><div class="gc" style="left:1918px;top:7.5px;width:218px;height:66.3px"><span>1</span></div></div><div class="row" style="top:750.2px;height:116.4px;background:#f9f9fc"><div class="bar" style="background:#4a6bd6"></div><div class="cb" style="left:62.60000000000002px;top:44.3px"></div><div class="chv" style="left:112px;top:48.2px"><svg width="20" height="20" viewBox="0 0 20 20" fill="none" ><path d="M8 5.4 L12.6 10 L8 14.6" stroke="#1a1f2b" stroke-width="2.1" stroke-linecap="round" stroke-linejoin="round"/></svg></div><div class="kname" style="left:152px;top:24.4px;letter-spacing:-0.226px">dallas homes for sale</div><div class="tag" style="left:152px;top:62.4px;width:76.5px;background:#fdd537">house</div><div class="num" style="right:1115px;top:45.2px">12.1K</div><div class="lnk" style="left:1101px;top:49.9px"><svg width="32" height="17" viewBox="0 0 30 16" fill="none" ><path d="M11.2 2 H7.6 a6 6 0 0 0 0 12 H11.2 M18.8 2 H22.4 a6 6 0 0 1 0 12 H18.8 M9.4 8 H20.6" stroke="#1a74d9" stroke-width="3" stroke-linecap="round" stroke-linejoin="round"/></svg></div><div class="num" style="right:733px;top:45.2px">3.9K</div><div class="numc" style="left:1456px;width:220px;top:45.2px">0</div><div class="gc" style="left:1684px;top:7.5px;width:218px;height:101.4px"><span>1</span></div><div class="gc" style="left:1918px;top:7.5px;width:218px;height:101.4px"><span>1</span></div></div><div class="row" style="top:866.6px;height:116.7px;background:#ffffff"><div class="bar" style="background:#b9770e"></div><div class="cb" style="left:62.60000000000002px;top:44.5px"></div><div class="chv" style="left:112px;top:48.4px"><svg width="20" height="20" viewBox="0 0 20 20" fill="none" ><path d="M8 5.4 L12.6 10 L8 14.6" stroke="#1a1f2b" stroke-width="2.1" stroke-linecap="round" stroke-linejoin="round"/></svg></div><div class="kname" style="left:152px;top:24.4px;letter-spacing:-0.157px">delaware homes for sale</div><div class="tag" style="left:152px;top:62.4px;width:76.5px;background:#fdd537">house</div><div class="num" style="right:1115px;top:45.4px">27.1K</div><div class="lnk" style="left:1101px;top:50.0px"><svg width="32" height="17" viewBox="0 0 30 16" fill="none" ><path d="M11.2 2 H7.6 a6 6 0 0 0 0 12 H11.2 M18.8 2 H22.4 a6 6 0 0 1 0 12 H18.8 M9.4 8 H20.6" stroke="#1a74d9" stroke-width="3" stroke-linecap="round" stroke-linejoin="round"/></svg></div><div class="num" style="right:733px;top:45.4px">8.8K</div><div class="numc" style="left:1456px;width:220px;top:45.4px">0</div><div class="gc" style="left:1684px;top:7.5px;width:218px;height:101.7px"><span>1</span></div><div class="gc" style="left:1918px;top:7.5px;width:218px;height:101.7px"><span>1</span></div></div><div class="row" style="top:983.3px;height:117.6px;background:#f9f9fc"><div class="bar" style="background:#5a2fd0"></div><div class="cb" style="left:62.60000000000002px;top:44.9px"></div><div class="chv" style="left:112px;top:48.8px"><svg width="20" height="20" viewBox="0 0 20 20" fill="none" ><path d="M8 5.4 L12.6 10 L8 14.6" stroke="#1a1f2b" stroke-width="2.1" stroke-linecap="round" stroke-linejoin="round"/></svg></div><div class="kname" style="left:152px;top:24.4px;letter-spacing:-0.171px">denver homes for sale</div><div class="tag" style="left:152px;top:62.4px;width:76.5px;background:#fdd537">house</div><div class="num" style="right:1115px;top:45.8px">130</div><div class="lnk" style="left:1101px;top:50.5px"><svg width="32" height="17" viewBox="0 0 30 16" fill="none" ><path d="M11.2 2 H7.6 a6 6 0 0 0 0 12 H11.2 M18.8 2 H22.4 a6 6 0 0 1 0 12 H18.8 M9.4 8 H20.6" stroke="#1a74d9" stroke-width="3" stroke-linecap="round" stroke-linejoin="round"/></svg></div><div class="num" style="right:733px;top:45.8px">42.3</div><div class="numc" style="left:1456px;width:220px;top:45.8px">0</div><div class="gc" style="left:1684px;top:7.5px;width:218px;height:102.6px"><span>1</span></div><div class="gc" style="left:1918px;top:7.5px;width:218px;height:102.6px"><span>1</span></div></div><div class="row" style="top:1100.9px;height:115.9px;background:#ffffff"><div class="bar" style="background:#c9991f"></div><div class="cb" style="left:62.60000000000002px;top:44.1px"></div><div class="chv" style="left:112px;top:48.0px"><svg width="20" height="20" viewBox="0 0 20 20" fill="none" ><path d="M8 5.4 L12.6 10 L8 14.6" stroke="#1a1f2b" stroke-width="2.1" stroke-linecap="round" stroke-linejoin="round"/></svg></div><div class="kname" style="left:152px;top:24.4px;letter-spacing:0.225px">detroit homes for sale</div><div class="tag" style="left:152px;top:62.4px;width:76.5px;background:#fdd537">house</div><div class="num" style="right:1115px;top:45.0px">2.9K</div><div class="lnk" style="left:1101px;top:49.7px"><svg width="32" height="17" viewBox="0 0 30 16" fill="none" ><path d="M11.2 2 H7.6 a6 6 0 0 0 0 12 H11.2 M18.8 2 H22.4 a6 6 0 0 1 0 12 H18.8 M9.4 8 H20.6" stroke="#1a74d9" stroke-width="3" stroke-linecap="round" stroke-linejoin="round"/></svg></div><div class="num" style="right:733px;top:45.0px">942.5</div><div class="numc" style="left:1456px;width:220px;top:45.0px">0</div><div class="gc" style="left:1684px;top:7.5px;width:218px;height:100.9px"><span>1</span></div><div class="gc" style="left:1918px;top:7.5px;width:218px;height:100.9px"><span>1</span></div></div><div class="row" style="top:1216.4px;height:81.5px;background:#f9f9fc"><div class="bar" style="background:#e252b4"></div><div class="cb" style="left:62.60000000000002px;top:26.9px"></div><div class="chv" style="left:112px;top:30.8px"><svg width="20" height="20" viewBox="0 0 20 20" fill="none" ><path d="M8 5.4 L12.6 10 L8 14.6" stroke="#1a1f2b" stroke-width="2.1" stroke-linecap="round" stroke-linejoin="round"/></svg></div><div class="kname" style="left:152px;top:29.1px;letter-spacing:-0.049px">duplex for sale</div><div class="num" style="right:1115px;top:27.8px">49.5K</div><div class="lnk" style="left:1101px;top:32.5px"><svg width="32" height="17" viewBox="0 0 30 16" fill="none" ><path d="M11.2 2 H7.6 a6 6 0 0 0 0 12 H11.2 M18.8 2 H22.4 a6 6 0 0 1 0 12 H18.8 M9.4 8 H20.6" stroke="#1a74d9" stroke-width="3" stroke-linecap="round" stroke-linejoin="round"/></svg></div><div class="num" style="right:733px;top:27.8px">16.1K</div><div class="numc" style="left:1456px;width:220px;top:27.8px">0</div><div class="gc" style="left:1684px;top:7.5px;width:218px;height:66.5px"><span>1</span></div><div class="gc" style="left:1918px;top:7.5px;width:218px;height:66.5px"><span>1</span></div></div><div class="row" style="top:1297.9px;height:116.3px;background:#ffffff"><div class="bar" style="background:#d6aa1f"></div><div class="cb" style="left:62.60000000000002px;top:44.2px"></div><div class="chv" style="left:112px;top:48.1px"><svg width="20" height="20" viewBox="0 0 20 20" fill="none" ><path d="M8 5.4 L12.6 10 L8 14.6" stroke="#1a1f2b" stroke-width="2.1" stroke-linecap="round" stroke-linejoin="round"/></svg></div><div class="kname" style="left:152px;top:24.4px;letter-spacing:-0.179px">georgia homes for sale</div><div class="tag" style="left:152px;top:62.4px;width:76.5px;background:#fdd537">house</div><div class="num" style="right:1115px;top:45.1px">4.4K</div><div class="lnk" style="left:1101px;top:49.8px"><svg width="32" height="17" viewBox="0 0 30 16" fill="none" ><path d="M11.2 2 H7.6 a6 6 0 0 0 0 12 H11.2 M18.8 2 H22.4 a6 6 0 0 1 0 12 H18.8 M9.4 8 H20.6" stroke="#1a74d9" stroke-width="3" stroke-linecap="round" stroke-linejoin="round"/></svg></div><div class="num" style="right:733px;top:45.1px">1.4K</div><div class="numc" style="left:1456px;width:220px;top:45.1px">0</div><div class="gc" style="left:1684px;top:7.5px;width:218px;height:101.3px"><span>1</span></div><div class="gc" style="left:1918px;top:7.5px;width:218px;height:101.3px"><span>1</span></div></div><div class="row" style="top:1414.2px;height:117.8px;background:#f9f9fc"><div class="bar" style="background:#a24f5c"></div><div class="cb" style="left:62.60000000000002px;top:45.0px"></div><div class="chv" style="left:112px;top:48.9px"><svg width="20" height="20" viewBox="0 0 20 20" fill="none" ><path d="M8 5.4 L12.6 10 L8 14.6" stroke="#1a1f2b" stroke-width="2.1" stroke-linecap="round" stroke-linejoin="round"/></svg></div><div class="kname" style="left:152px;top:24.4px;letter-spacing:-0.105px">home for sale</div><div class="tag" style="left:152px;top:62.4px;width:76.5px;background:#fdd537">house</div><div class="num" style="right:1115px;top:45.9px">33.1K</div><div class="lnk" style="left:1089.5px;top:50.6px"><svg width="32" height="17" viewBox="0 0 30 16" fill="none" ><path d="M11.2 2 H7.6 a6 6 0 0 0 0 12 H11.2 M18.8 2 H22.4 a6 6 0 0 1 0 12 H18.8 M9.4 8 H20.6" stroke="#1a74d9" stroke-width="3" stroke-linecap="round" stroke-linejoin="round"/></svg></div><div class="red3" style="left:1138px;top:47.9px">3</div><div class="num" style="right:733px;top:45.9px">10.8K</div><div class="numc" style="left:1456px;width:220px;top:45.9px">0</div><div class="gc" style="left:1684px;top:7.5px;width:218px;height:102.8px"><span>1</span></div><div class="gc" style="left:1918px;top:7.5px;width:218px;height:102.8px"><span>1</span></div></div><div class="hl" style="top:271px"></div><div class="hl" style="top:586.5px"></div><div class="hl" style="top:667.9px"></div><div class="hl" style="top:749.2px"></div><div class="hl" style="top:865.6px"></div><div class="hl" style="top:982.3px"></div><div class="hl" style="top:1099.9px"></div><div class="hl" style="top:1215.4px"></div><div class="hl" style="top:1296.9px"></div><div class="hl" style="top:1413.2px"></div><div class="hl dk" style="top:352.4px"></div><div class="hl dk" style="top:468.4px"></div><div class="vl" style="left:827px"></div><div class="vl" style="left:1054.5px"></div><div class="vl" style="left:1180.5px"></div><div class="vl" style="left:1455px"></div><div class="vl" style="left:1674.5px"></div><div class="vl" style="left:1909px"></div></div>
  <div id="topbar">
<div class="tbx" style="left:30px;width:380.1px">
  <div style="position:absolute;left:31.4px;top:14.8px"><svg width="29" height="29" viewBox="0 0 48 48" fill="none" ><path fill="#EA4335" d="M24 9.5c3.54 0 6.71 1.22 9.21 3.6l6.85-6.85C35.9 2.38 30.47 0 24 0 14.62 0 6.51 5.38 2.56 13.22l7.98 6.19C12.43 13.72 17.74 9.5 24 9.5z"/><path fill="#4285F4" d="M46.98 24.55c0-1.57-.15-3.09-.38-4.55H24v9.02h12.94c-.58 2.96-2.26 5.48-4.78 7.18l7.73 6c4.51-4.18 7.09-10.36 7.09-17.65z"/><path fill="#FBBC05" d="M10.53 28.59c-.48-1.45-.76-2.99-.76-4.59s.27-3.14.76-4.59l-7.98-6.19C.92 16.46 0 20.12 0 24c0 3.88.92 7.54 2.56 10.78l7.97-6.19z"/><path fill="#34A853" d="M24 48c6.48 0 11.93-2.13 15.89-5.81l-7.73-6c-2.15 1.45-4.92 2.3-8.16 2.3-6.26 0-11.57-4.22-13.47-9.91l-7.98 6.19C6.51 42.62 14.62 48 24 48z"/></svg></div>
  <div style="position:absolute;left:78px;top:14.6px"><svg width="38" height="29" viewBox="0 0 38 29" fill="none" ><defs><clipPath id="fc"><rect width="38" height="29" rx="3.5"/></clipPath></defs><g clip-path="url(#fc)"><rect width="38" height="29" fill="#fbf4f5"/><rect x="0" y="0.00" width="38" height="2.23" fill="#d63a52"/><rect x="0" y="4.46" width="38" height="2.23" fill="#d63a52"/><rect x="0" y="8.92" width="38" height="2.23" fill="#d63a52"/><rect x="0" y="13.38" width="38" height="2.23" fill="#d63a52"/><rect x="0" y="17.84" width="38" height="2.23" fill="#d63a52"/><rect x="0" y="22.30" width="38" height="2.23" fill="#d63a52"/><rect x="0" y="26.76" width="38" height="2.23" fill="#d63a52"/><rect width="15.8" height="13.4" fill="#4b4f92"/><g fill="#d9daf0"><circle cx="1.7" cy="1.6" r="0.62"/><circle cx="1.7" cy="4.2" r="0.62"/><circle cx="1.7" cy="6.7" r="0.62"/><circle cx="1.7" cy="9.2" r="0.62"/><circle cx="1.7" cy="11.8" r="0.62"/><circle cx="4.2" cy="1.6" r="0.62"/><circle cx="4.2" cy="4.2" r="0.62"/><circle cx="4.2" cy="6.7" r="0.62"/><circle cx="4.2" cy="9.2" r="0.62"/><circle cx="4.2" cy="11.8" r="0.62"/><circle cx="6.7" cy="1.6" r="0.62"/><circle cx="6.7" cy="4.2" r="0.62"/><circle cx="6.7" cy="6.7" r="0.62"/><circle cx="6.7" cy="9.2" r="0.62"/><circle cx="6.7" cy="11.8" r="0.62"/><circle cx="9.2" cy="1.6" r="0.62"/><circle cx="9.2" cy="4.2" r="0.62"/><circle cx="9.2" cy="6.7" r="0.62"/><circle cx="9.2" cy="9.2" r="0.62"/><circle cx="9.2" cy="11.8" r="0.62"/><circle cx="11.7" cy="1.6" r="0.62"/><circle cx="11.7" cy="4.2" r="0.62"/><circle cx="11.7" cy="6.7" r="0.62"/><circle cx="11.7" cy="9.2" r="0.62"/><circle cx="11.7" cy="11.8" r="0.62"/><circle cx="14.2" cy="1.6" r="0.62"/><circle cx="14.2" cy="4.2" r="0.62"/><circle cx="14.2" cy="6.7" r="0.62"/><circle cx="14.2" cy="9.2" r="0.62"/><circle cx="14.2" cy="11.8" r="0.62"/></g></g></svg></div>
  <div class="t" style="left:134px;font-size:24.3px;-webkit-text-stroke:0.35px #1d2330">USA</div>
  <div class="en">EN</div>
  <div style="position:absolute;left:330px;top:18.4px"><svg width="24" height="24" viewBox="0 0 24 24" fill="none" ><path d="M6.2 9 L12 14.8 L17.8 9" stroke="#1a1f2b" stroke-width="2.4" stroke-linecap="round" stroke-linejoin="round"/></svg></div>
</div>
<div class="tbx" style="left:431.9px;width:389.2px;background:#f9f9fc">
  <div class="t" style="left:24px;font-size:26px;color:#8c8c8f">Поиск</div>
  <div style="position:absolute;left:346px;top:17px"><svg width="28" height="28" viewBox="0 0 28 28" fill="none" ><circle cx="11.4" cy="11.4" r="7.7" stroke="#adabc3" stroke-width="2.5" stroke-linecap="round" stroke-linejoin="round"/><path d="M17 17 L24.4 24.4" stroke="#adabc3" stroke-width="2.8" stroke-linecap="round" stroke-linejoin="round" stroke-linecap="butt"/></svg></div>
</div>
<div class="tbx" style="left:843.5px;width:464.7px">
  <div class="t" style="left:24px;font-size:25.7px">Режим просмотра:</div>
  <div style="position:absolute;left:262px;top:16px"><svg width="34" height="28" viewBox="0 0 34 28" fill="none" ><path d="M2.2 5.6 a3 3 0 0 1 3 -3 H12.6 l3.4 3.4 H28.8 a3 3 0 0 1 3 3 V22.6 a3 3 0 0 1 -3 3 H5.2 a3 3 0 0 1 -3 -3 Z" stroke="#1a1f2b" stroke-width="2.8" stroke-linecap="round" stroke-linejoin="round"/></svg></div>
  <div class="t" style="left:311px;font-size:25.7px">Группы</div>
  <div style="position:absolute;left:415px;top:18px"><svg width="24" height="24" viewBox="0 0 24 24" fill="none" ><path d="M6.2 9 L12 14.8 L17.8 9" stroke="#1a1f2b" stroke-width="2.4" stroke-linecap="round" stroke-linejoin="round"/></svg></div>
</div>
<div class="tbx" style="left:1554.5px;width:86.7px">
  <div style="position:absolute;left:17px;top:13.5px"><svg width="30" height="35" viewBox="0 0 32 38" fill="none" ><path d="M22.6 2.4 H5.6 a3 3 0 0 0 -3 3 V27.6" stroke="#1a1f2b" stroke-width="3" stroke-linecap="round" stroke-linejoin="round"/><rect x="9.4" y="9.4" width="20" height="26" rx="3" stroke="#1a1f2b" stroke-width="3" stroke-linecap="round" stroke-linejoin="round"/></svg></div>
  <div style="position:absolute;left:55px;top:19.5px"><svg width="20" height="20" viewBox="0 0 20 20" fill="none" ><path d="M4.6 7 L10 12.4 L15.4 7" stroke="#1a1f2b" stroke-width="2.5" stroke-linecap="round" stroke-linejoin="round"/></svg></div>
</div>
<div class="tbx" style="left:1664.5px;width:200.2px">
  <div style="position:absolute;left:25px;top:17px"><svg width="36" height="26" viewBox="0 0 36 26" fill="none" ><path d="M2 3.6 H34 M8.4 13 H27.6 M14.2 22.4 H21.8" stroke="#1a1f2b" stroke-width="3.2"/></svg></div>
  <div class="t" style="left:74.5px;font-size:21px">ФИЛЬТРЫ</div>
</div>
<div class="tbx" style="left:1887.5px;width:200.7px">
  <div style="position:absolute;left:26.5px;top:17px"><svg width="34" height="26" viewBox="0 0 34 26" fill="none" ><rect x="1.8" y="1.8" width="30.4" height="22.4" stroke="#141a26" stroke-width="3.6"/><path d="M11.8 2 V24 M22.2 2 V24" stroke="#141a26" stroke-width="3.4"/></svg></div>
  <div class="t" style="left:75px;font-size:21.3px">КОЛОНКИ</div>
</div>
</div>
  
<div class="thead">
 <div class="cb" style="left:23px;top:32.3px"></div>
 <div class="th" style="left:67.70000000000005px;top:36px;font-size:19.7px">ГРУППЫ</div><div class="th" style="left:156.60000000000002px;top:36px;font-size:18.8px;font-weight:400;-webkit-text-stroke:0.35px #2e4050;letter-spacing:-0.1px">(1 - 3 ИЗ 3)</div>
 <div class="thc" style="left:792px;top:36px"><svg width="24" height="24" viewBox="0 0 24 24" fill="none" ><path d="M6.2 9 L12 14.8 L17.8 9" stroke="#1a1f2b" stroke-width="2.4" stroke-linecap="round" stroke-linejoin="round"/></svg></div>
 <div class="th" style="left:847px;top:36px">ЧАСТОТНОСТЬ</div>
 <div class="th" style="left:1080px;top:36px;letter-spacing:-0.4px">URL</div>
 <div class="th" style="left:1302px;top:25px;width:98px;text-align:center;line-height:22.5px;white-space:normal">ПРОГНОЗ ТРАФИКА</div>
 <div class="th" style="left:1486px;top:36px;letter-spacing:0.7px">ДИНАМИКА</div>
 <div class="th" style="left:1746px;top:36px;letter-spacing:0.4px">20 ИЮЛ</div>
 <div class="th" style="left:1982px;top:36px;letter-spacing:0.2px">21 ИЮЛ</div>
 <div class="vlh" style="left:827px"></div><div class="vlh" style="left:1054.5px"></div><div class="vlh" style="left:1180.5px"></div><div class="vlh" style="left:1455px"></div><div class="vlh" style="left:1674.5px"></div><div class="vlh" style="left:1909px"></div>
</div>
</div>
<div id="collapse"><svg width="16" height="20" viewBox="0 0 16 20" fill="none" ><path d="M10.9 4.4 L5.2 10.1 L10.9 15.8" stroke="#fff" stroke-width="2.6" fill="none"/></svg></div>
<div class="badge" style="left:135px;top:21px;width:62px;height:62px;border-radius:0 10px 10px 0"><span style="left:-1px">1</span></div>
<div class="badge" style="left:526px;top:432px;width:62px;height:62px;border-radius:0 10px 10px 0"><span>2</span></div>
<div id="tipglow"></div>
<div class="badge" style="left:1281px;top:252px;width:62px;height:70px;border-radius:10px 10px 0 0"><span style="top:-4px">3</span></div>
<div id="tipred"></div>
<div id="tip">Мониторинг ТОП-100</div>
<div id="tiparrow"></div>
</body></html>
